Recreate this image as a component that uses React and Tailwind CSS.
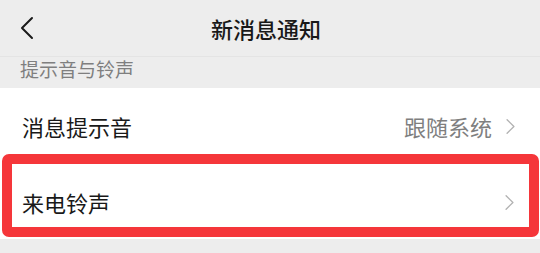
import React from "react";

function Chevron({ className }) {
  return (
    <svg className={className} viewBox="0 0 12 20" fill="none" stroke="currentColor" strokeWidth="1.6" strokeLinecap="round" strokeLinejoin="round">
      <polyline points="2 2 10 10 2 18" />
    </svg>
  );
}

export default function App() {
  return (
    <div className="w-[540px] h-[253px] overflow-hidden bg-[#ededed] font-['Noto_Sans_CJK_SC','Noto_Sans',sans-serif]">
      <header className="h-[57px] flex items-center relative border-b border-[#e4e4e4]">
        <button type="button" className="pl-[19px] text-[#1a1a1a] relative z-10">
          <svg className="w-[15px] h-[24px]" viewBox="0 0 15 24" fill="none" stroke="currentColor" strokeWidth="2" strokeLinecap="round" strokeLinejoin="round">
            <polyline points="13 2 3 12 13 22" />
          </svg>
        </button>
        <h1 className="absolute left-0 right-0 text-center text-[22px] font-medium text-[#191919] pr-[8px]">新消息通知</h1>
      </header>

      <div className="h-[31px] pl-[20px] pb-[6px] flex items-center text-[19px] text-[#7f7f7f]">提示音与铃声</div>

      <div className="bg-white">
        <div className="h-[66px] pl-[22px] pr-[24px] flex items-center justify-between">
          <span className="text-[22px] text-[#191919] pt-[10px]">消息提示音</span>
          <span className="flex items-center gap-[13px] text-[22px] text-[#7f7f7f] pt-[10px]">
            跟随系统
            <Chevron className="w-[11px] h-[17px] text-[#b2b2b2]" />
          </span>
        </div>
        <div className="ml-[2px] mr-[1px] h-[83px] border-[10px] border-[#f5363a] rounded-[7px] pl-[10px] pr-[14px] flex items-center justify-between">
          <span className="text-[22px] text-[#191919] pt-[14px]">来电铃声</span>
          <Chevron className="w-[11px] h-[17px] text-[#b2b2b2] mt-[14px]" />
        </div>
        <div className="h-[2px]" />
      </div>
    </div>
  );
}
